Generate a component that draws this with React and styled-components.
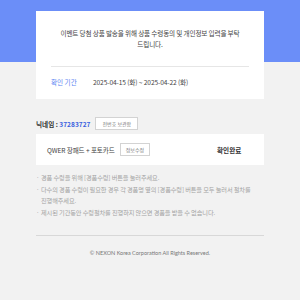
import React from 'react';
import styled, { createGlobalStyle } from 'styled-components';

const Global = createGlobalStyle`
  html, body {
    margin: 0;
    padding: 0;
    background: #f2f2f2;
  }
  body {
    font-family: "Noto Sans CJK KR", "Noto Sans", sans-serif;
    color: #333;
  }
`;

const Page = styled.div`
  width: 300px;
  height: 300px;
  overflow: hidden;
  background: linear-gradient(#6b8ef8, #6b8ef8) top left / 100% 62px no-repeat, #f2f2f2;
  padding: 11px 36px 0;
  box-sizing: border-box;
`;

const Card = styled.div`
  background: #fff;
  padding: ${p => p.$pad || '0'};
`;

const Intro = styled.p`
  margin: 0;
  font-size: 6.6px;
  line-height: 11px;
  text-align: center;
  color: #444;
  letter-spacing: -0.15px;
  padding: 0 6px;
`;

const Divider = styled.hr`
  border: 0;
  border-top: 1px solid ${p => p.$color || '#e6e6e6'};
  margin: ${p => p.$margin || '0'};
`;

const PeriodRow = styled.div`
  display: flex;
  align-items: center;
  font-size: 6.6px;
  line-height: 11px;
`;

const PeriodLabel = styled.span`
  width: 42px;
  color: #5b84f2;
`;

const PeriodValue = styled.span`
  color: #444;
  letter-spacing: -0.1px;
`;

const NickRow = styled.div`
  display: flex;
  align-items: center;
  gap: 5px;
  margin-top: 18px;
  height: 13px;
  font-size: 6.6px;
  font-weight: 700;
  color: #333;
`;

const Nick = styled.span`
  color: #3b62e0;
`;

const SmallBtn = styled.span`
  display: inline-flex;
  align-items: center;
  height: 13px;
  padding: 0 ${p => p.$px || '5px'};
  box-sizing: border-box;
  border: 1px solid #d3d3d3;
  background: #fff;
  font-size: 5px;
  font-weight: 400;
  color: #777;
`;

const Item = styled.div`
  margin-top: 4px;
  height: 31px;
  background: #fff;
  display: flex;
  align-items: center;
  padding-left: 11px;
  font-size: 6.6px;
  color: #444;
`;

const ItemName = styled.span`
  margin-right: 5px;
  letter-spacing: -0.1px;
`;

const Status = styled.span`
  margin-left: auto;
  width: 47px;
  font-weight: 700;
  color: #333;
`;

const Notes = styled.ul`
  list-style: none;
  margin: 7px 0 0;
  padding: 0 12px 0 0;
`;

const Note = styled.li`
  position: relative;
  padding-left: 5px;
  font-size: 6.2px;
  line-height: 11.5px;
  color: #a3a3a3;
  letter-spacing: -0.1px;
  &::before {
    content: '·';
    position: absolute;
    left: 0;
    top: 0;
  }
`;

const Footer = styled.div`
  margin-top: 12px;
  text-align: center;
  font-family: "Lato", "Noto Sans", sans-serif;
  font-size: 5.5px;
  line-height: 10px;
  color: #777;
`;

export default function App() {
  return (
    <Page>
      <Global />
      <Card $pad="17px 15px 11px">
        <Intro>
          이벤트 당첨 상품 발송을 위해 상품 수령동의 및 개인정보 입력을 부탁 드립니다.
        </Intro>
        <Divider $margin="16px 0 10px" />
        <PeriodRow>
          <PeriodLabel>확인 기간</PeriodLabel>
          <PeriodValue>2025-04-15 (화) ~ 2025-04-22 (화)</PeriodValue>
        </PeriodRow>
      </Card>

      <NickRow>
        <span>
          닉네임 : <Nick>37283727</Nick>
        </span>
        <SmallBtn $px="6px">전번호 보관함</SmallBtn>
      </NickRow>

      <Item>
        <ItemName>QWER 장패드 + 포토카드</ItemName>
        <SmallBtn>정보수정</SmallBtn>
        <Status>확인완료</Status>
      </Item>

      <Notes>
        <Note>경품 수령을 위해 [경품수령] 버튼을 눌러주세요.</Note>
        <Note>다수의 경품 수령이 필요한 경우 각 경품명 옆의 [경품수령] 버튼을 모두 눌러서 절차를 진행해주세요.</Note>
        <Note>제시된 기간동안 수령절차를 진행하지 않으면 경품을 받을 수 없습니다.</Note>
      </Notes>

      <Divider $color="#d8d8d8" $margin="17px 0 0" />
      <Footer>© NEXON Korea Corporation All Rights Reserved.</Footer>
    </Page>
  );
}
